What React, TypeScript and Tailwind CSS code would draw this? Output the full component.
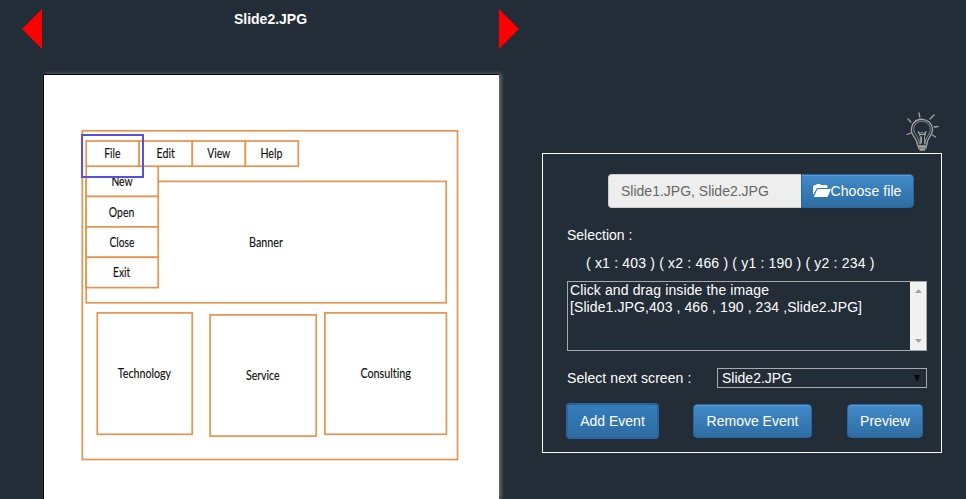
const boxes: [number, number, number, number][] = [
  [82.3, 130.8, 375.2, 328.7],
  [86.2, 181.4, 360, 121.4],
  [97.3, 312.9, 94.9, 121.4],
  [210.1, 314.9, 106.1, 121.2],
  [324.9, 312.9, 121.5, 121.4],
];

const cells: [number, number, number, number][] = [
  [86.2, 166.2, 72, 30.3],
  [86.2, 196.5, 72, 30.4],
  [86.2, 226.9, 72, 30.4],
  [86.2, 257.3, 72, 30.3],
  [86.2, 141, 53, 25.2],
  [139.2, 141, 53.1, 25.2],
  [192.3, 141, 53.1, 25.2],
  [245.4, 141, 52.9, 25.2],
];

const labels: [string, number, number, number][] = [
  ["File", 104.3, 158.4, 16.2],
  ["Edit", 156.5, 158.4, 18.3],
  ["View", 207.2, 158.4, 23],
  ["Help", 260.4, 158.4, 22],
  ["New", 111.4, 186.4, 21.2],
  ["Open", 108.8, 217.1, 25.4],
  ["Close", 109.4, 247.1, 25],
  ["Exit", 113, 277.4, 17.2],
  ["Banner", 249, 247.1, 34],
  ["Technology", 117.8, 378.4, 53.2],
  ["Service", 246, 379.9, 33.6],
  ["Consulting", 360.4, 378.4, 50.5],
];

function Slide() {
  return (
    <svg width="456" height="425" viewBox="43 74 456 425" className="block">
      <g fill="white" stroke="#e69450" strokeWidth="1.7">
        {[...boxes, ...cells].map(([x, y, w, h], i) => (
          <rect key={i} x={x} y={y} width={w} height={h} />
        ))}
      </g>
      <g
        fill="#111"
        stroke="#111"
        strokeWidth=".15"
        fontSize="13.2"
        fontFamily="Lato, sans-serif"
        className="[font-variant-ligatures:none]"
      >
        {labels.map(([t, x, y, w]) => (
          <text key={t} x={x} y={y} textLength={w} lengthAdjust="spacingAndGlyphs">
            {t}
          </text>
        ))}
      </g>
      <rect x="82" y="135" width="61" height="42" fill="none" stroke="#5750dc" strokeWidth="2" />
      <path d="M43.500 499V74.500H499" fill="none" stroke="black" />
    </svg>
  );
}

function Bulb() {
  return (
    <svg width="34" height="40" viewBox="0 0 34 40" fill="none" stroke="#a3a6a5" strokeLinecap="round">
      <path d="M11.500 33c0-4-1.700-6-3.600-8.400C5.400 21.500 4.800 18 6 14.300 7.800 9.400 11.800 7 16.500 7.300c5.500.3 9.600 4.200 10 9.500.3 3.700-1.500 6.300-3.500 9-1.500 2-2 3.900-2.200 7.200" strokeWidth="1.300" />
      <path d="M13.200 32c0-4-1.500-6.500-3.300-9C7.300 19.300 7.300 16 9 13c1.600-2.800 4.500-4 7.400-3.800 4.300.3 7.700 3.400 7.900 7.600.1 3-1.200 5.200-2.900 7.700-1.400 2.100-2.300 4-2.400 7.500" strokeWidth=".8" />
      <path d="M14.300 32V24.500l-2.300-5 2.800 2 1.400-1.500 1.600 1.500 2.400-2-1.700 5 .2 7.500M13.500 22.500h5.500M15.500 25v6" strokeWidth="1" />
      <path d="M12.300 34.200h8M12.500 36h7.500M14 37.800h4.500" strokeWidth="1.700" />
      <path d="m2 7 2.800 3M13 1l.8 4M28 3l-4 4M32 14.500l-4 .5M1 22.500l4-1.500M26.500 23l3 2" strokeWidth="1.300" />
    </svg>
  );
}

const button =
  "flex h-[34px] items-center justify-center rounded-[4px] border border-[#2b669a] bg-linear-to-b from-[#428bca] to-[#2d6ca2] pb-px text-sm text-white shadow-[inset_0_1px_0_rgba(255,255,255,0.15),0_1px_1px_rgba(0,0,0,0.075)]";

export default function App() {
  return (
    <div className="flex h-[499px] w-[966px] overflow-hidden bg-[#232d37] font-['Liberation_Sans',Arial,sans-serif] text-sm leading-5 text-white">
      <main className="w-[542px] shrink-0">
        <header className="flex h-[74px] items-start pl-[22px] pt-[9px]">
          <svg width="20" height="40" className="shrink-0">
            <path d="M20 0v40L0 20z" fill="#f00" />
          </svg>
          <h1 className="w-[457px] text-center font-bold">Slide2.JPG</h1>
          <svg width="20" height="40" className="shrink-0">
            <path d="M0 0v40l20-20z" fill="#f00" />
          </svg>
        </header>
        <section className="ml-[43px] h-[425px] w-[456px] bg-white shadow-[2px_0_4px_0_#777]">
          <Slide />
        </section>
      </main>
      <aside className="w-[400px] shrink-0 pt-[112px]">
        <div className="flex h-[41px] justify-end pr-[2px]">
          <Bulb />
        </div>
        <div className="h-[300px] border border-white pl-6 pr-[14px] pt-5">
          <div className="ml-[41px] flex h-[34px]">
            <div className="flex w-[193px] items-center rounded-l-[4px] border border-r-0 border-[#ccc] bg-[#eee] pl-3 text-[#666]">Slide1.JPG, Slide2.JPG</div>
            <button className={button + " w-[113px] rounded-l-none tracking-[0.08px]"}>
              <svg width="18" height="14" viewBox="0 0 18 14" className="-ml-px">
                <path d="M0 11V2.500L1.500 1H3l.8-1H7l1 1h5.500l1 1v2H4L0 11z" fill="white" />
                <path d="M4.500 5H18l-3.500 8H.8z" fill="white" />
              </svg>
              Choose file
            </button>
          </div>
          <div className="mt-[17px]">Selection :</div>
          <div className="mt-2 whitespace-pre pl-[19px] tracking-[0.18px]">( x1 : 403 ) ( x2 : 466 ) ( y1 : 190 ) ( y2 : 234 )</div>
          <div className="mt-2 flex h-[70px] w-[360px] border border-[#a9a9a9]">
            <div className="flex-1 whitespace-nowrap pl-[2px] leading-[17px]">
              <p className="tracking-[0.12px]">Click and drag inside the image</p>
              <p className="tracking-[0.09px]">[Slide1.JPG,403 , 466 , 190 , 234 ,Slide2.JPG]</p>
            </div>
            <div className="flex w-4 flex-col items-center justify-between bg-[#f1f1f1] py-[7px]">
              <svg width="7" height="4"><path d="M0 4h7L3.500 0z" fill="#a3a3a3" /></svg>
              <svg width="7" height="4"><path d="M0 0h7L3.500 4z" fill="#a3a3a3" /></svg>
            </div>
          </div>
          <div className="mt-[17px] flex w-[360px] items-center justify-between">
            <span className="tracking-[0.07px]">Select next screen :</span>
            <div className="flex h-5 w-[210px] items-center justify-between border border-[#a9a9a9] pl-1 pr-[6px]">
              <span>Slide2.JPG</span>
              <svg width="6" height="7"><path d="M0 0h6L3 7z" fill="#080808" /></svg>
            </div>
          </div>
          <div className="-ml-px mt-[15px] flex items-center">
            <button className="flex h-9 w-[93px] items-center justify-center rounded-[4px] border-2 border-[#2f62a0] bg-linear-to-b from-[#357ebd] to-[#2d6ca2] pb-px text-sm text-white">Add Event</button>
            <button className={button + " ml-[34px] w-[119px]"}>Remove Event</button>
            <button className={button + " ml-[35px] w-[76px]"}>Preview</button>
          </div>
        </div>
      </aside>
    </div>
  );
}
